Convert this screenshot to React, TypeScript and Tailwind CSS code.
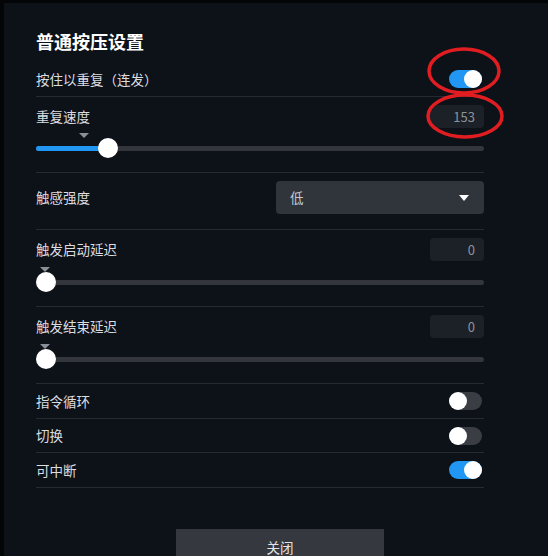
import React from 'react'

const font = { fontFamily: '"Noto Sans CJK SC", "Noto Sans", sans-serif' }

function Toggle({ on }: { on: boolean }) {
  return (
    <div
      className={`relative w-[33px] h-[18px] rounded-full ${on ? 'bg-[#2196f3]' : 'bg-[#3a3d44]'}`}
    >
      <div
        className={`absolute top-0 w-[18px] h-[18px] rounded-full bg-white ${on ? 'right-0' : 'left-0'}`}
      />
    </div>
  )
}

function NumBox({ value }: { value: number }) {
  return (
    <div className="w-[54px] h-[23px] rounded-sm bg-[#1c2027] flex items-center justify-end pr-[9px] text-[13px] text-[#8d929a]">
      {value}
    </div>
  )
}

function Slider({ fill, marker }: { fill: number; marker: number }) {
  return (
    <div className="relative h-[20px] flex items-center">
      <div className="w-full h-[5px] rounded-full bg-[#33363c] overflow-hidden">
        {fill > 0 && <div className="h-full bg-[#2196f3]" style={{ width: fill }} />}
      </div>
      <div
        className="absolute top-[-5px] w-0 h-0 border-l-[5px] border-r-[5px] border-t-[5px] border-l-transparent border-r-transparent border-t-[#8a8f98]"
        style={{ left: marker - 5 }}
      />
      <div
        className="absolute top-0 w-[20px] h-[20px] rounded-full bg-white"
        style={{ left: Math.max(fill - 10, 0) }}
      />
    </div>
  )
}

export default function App() {
  return (
    <div
      className="relative w-[548px] h-[556px] overflow-hidden bg-[#0d1118] border-l-4 border-t-[3px] border-[#040507]"
      style={font}
    >
      <div className="w-[480px] pl-8">
        {/* title */}
        <div className="pt-[26px] h-[50px] flex items-end">
          <h1 className="h-6 leading-6 text-[18px] font-bold text-white">普通按压设置</h1>
        </div>

        {/* hold to repeat */}
        <div className="mt-[9px] h-[35px] flex items-center justify-between border-b border-[#262a31] text-[13.5px] text-[#dcdde0]">
          <span>按住以重复（连发）</span>
          <div className="mr-[2px]">
            <Toggle on />
          </div>
        </div>

        {/* repeat speed */}
        <div className="pt-2 pb-[14px] border-b border-[#262a31]">
          <div className="flex items-center justify-between text-[13.5px] text-[#dcdde0]">
            <span>重复速度</span>
            <NumBox value={153} />
          </div>
          <div className="mt-[10px]">
            <Slider fill={72} marker={48} />
          </div>
        </div>

        {/* haptic strength */}
        <div className="pt-2 pb-[15px] flex items-center justify-between border-b border-[#262a31] text-[13.5px] text-[#dcdde0]">
          <span>触感强度</span>
          <div className="w-[208px] h-[33px] rounded-sm bg-[#30343b] flex items-center justify-between pl-[14px] pr-[15px]">
            <span className="text-[#c9cacd]">低</span>
            <div className="w-0 h-0 border-l-[5px] border-r-[5px] border-t-[6px] border-l-transparent border-r-transparent border-t-white" />
          </div>
        </div>

        {/* trigger start delay */}
        <div className="pt-2 pb-[14px] border-b border-[#262a31]">
          <div className="flex items-center justify-between text-[13.5px] text-[#dcdde0]">
            <span>触发启动延迟</span>
            <NumBox value={0} />
          </div>
          <div className="mt-[11px]">
            <Slider fill={0} marker={9} />
          </div>
        </div>

        {/* trigger end delay */}
        <div className="pt-2 pb-[14px] border-b border-[#262a31]">
          <div className="flex items-center justify-between text-[13.5px] text-[#dcdde0]">
            <span>触发结束延迟</span>
            <NumBox value={0} />
          </div>
          <div className="mt-[11px]">
            <Slider fill={0} marker={9} />
          </div>
        </div>

        {[
          { label: '指令循环', on: false, h: 'h-[35px]' },
          { label: '切换', on: false, h: 'h-[34px]' },
          { label: '可中断', on: true, h: 'h-[35px]' },
        ].map((r) => (
          <div
            key={r.label}
            className={`${r.h} flex items-center justify-between border-b border-[#262a31] text-[13.5px] text-[#dcdde0]`}
          >
            <span>{r.label}</span>
            <div className="mr-[2px]">
              <Toggle on={r.on} />
            </div>
          </div>
        ))}

        <button className="mt-[41px] ml-[140px] w-[208px] h-9 bg-[#35383e] flex items-center justify-center pt-[1px] text-[13.5px] text-[#e4e5e7]">
          关闭
        </button>
      </div>

      {/* red annotation circles */}
      <svg className="absolute left-[-4px] top-[-3px] pointer-events-none" width="548" height="556">
        <ellipse cx="464" cy="71" rx="35" ry="22" fill="none" stroke="#e01e22" strokeWidth="3.5" />
        <ellipse cx="465" cy="116" rx="37" ry="21" fill="none" stroke="#e01e22" strokeWidth="3.5" />
      </svg>
    </div>
  )
}
